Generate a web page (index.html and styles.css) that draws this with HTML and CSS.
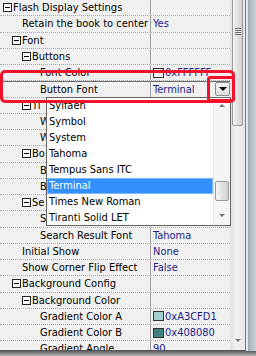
FILE: index.html
```html
<!DOCTYPE html>
<html>
  <head>
    <title>Flash Display Settings</title>
    <link rel="stylesheet" href="styles.css">
  </head>
  <body>
    <div class="window">
      <div class="pane">
        <div class="grid">
          <div class="row"><div class="name g0"><span class="box"></span>Flash Display Settings</div><div class="value"></div></div>
          <div class="row"><div class="name l1">Retain the book to center</div><div class="value">Yes</div></div>
          <div class="row"><div class="name g1"><span class="box"></span>Font</div><div class="value"></div></div>
          <div class="row"><div class="name g2"><span class="box"></span>Buttons</div><div class="value"></div></div>
          <div class="row"><div class="name l3">Font Color</div><div class="value"><span class="swatch white"></span>0xFFFFFF</div></div>
          <div class="row editing"><div class="name l3">Button Font</div><div class="value">Terminal<span class="drop-btn"></span></div></div>
          <!-- rows below are mostly hidden behind the open font list -->
          <div class="row"><div class="name g2"><span class="box"></span>Ti</div><div class="value"></div></div>
          <div class="row"><div class="name l3">W</div><div class="value"></div></div>
          <div class="row"><div class="name l3">W</div><div class="value"></div></div>
          <div class="row"><div class="name g2"><span class="box"></span>Bo</div><div class="value"></div></div>
          <div class="row"><div class="name l3">B</div><div class="value"></div></div>
          <div class="row"><div class="name l3">B</div><div class="value"></div></div>
          <div class="row"><div class="name g2"><span class="box"></span>Se</div><div class="value"></div></div>
          <div class="row"><div class="name l3">S</div><div class="value"></div></div>
          <div class="row"><div class="name l3">Search Result Font</div><div class="value">Tahoma</div></div>
          <div class="row"><div class="name l1">Initial Show</div><div class="value">None</div></div>
          <div class="row"><div class="name l1">Show Corner Flip Effect</div><div class="value">False</div></div>
          <div class="row"><div class="name g1"><span class="box"></span>Background Config</div><div class="value"></div></div>
          <div class="row"><div class="name g2"><span class="box"></span>Background Color</div><div class="value"></div></div>
          <div class="row"><div class="name l3">Gradient Color A</div><div class="value"><span class="swatch aqua"></span>0xA3CFD1</div></div>
          <div class="row"><div class="name l3">Gradient Color B</div><div class="value"><span class="swatch teal"></span>0x408080</div></div>
          <div class="row"><div class="name l3">Gradient Angle</div><div class="value">90</div></div>
        </div>
        <div class="scrollbar">
          <div class="thumb"><span class="grip"></span></div>
          <span class="arrow-down"></span>
        </div>
      </div>
      <div class="frame"></div>

      <div class="dropdown">
        <ul class="options">
          <li>Sylfaen</li>
          <li>Symbol</li>
          <li>System</li>
          <li>Tahoma</li>
          <li>Tempus Sans ITC</li>
          <li class="selected">Terminal</li>
          <li>Times New Roman</li>
          <li>Tiranti Solid LET</li>
        </ul>
        <div class="list-scroll">
          <span class="arrow-up"></span>
          <div class="list-thumb"></div>
          <span class="arrow-down small"></span>
        </div>
      </div>

      <div class="mark mark-row"></div>
      <div class="mark mark-btn"></div>
    </div>
  </body>
</html>
```

FILE: styles.css
```css
body {
  margin: 0;
  background: linear-gradient(#5e5e5e, #c8c8c8 6px, #e0e0e0);
  font-family: "DejaVu Sans Condensed", "Liberation Sans", sans-serif;
  font-size: 11px;
}

.window {
  position: relative;
  display: flex;
  width: 256px;
  height: 351px;
  overflow: hidden;
}

.pane {
  display: flex;
  width: 246px;
  height: 351px;
  box-sizing: border-box;
  border-right: 1px solid #7c7c7c;
  border-bottom: 1px solid #555;
  background: #f0f0f0;
}

.frame {
  width: 10px;
  background: linear-gradient(to right, #dde7f3 0, #dde7f3 2px, #9aa3ad 2px, #b7bcc2 5px, #cfcfcf);
}

.grid {
  width: 231px;
  overflow: hidden;
}

.row {
  display: grid;
  grid-template-columns: 151px 80px;
  height: 16.25px;
  box-sizing: border-box;
  border-bottom: 1px dotted #a8a8a8;
  line-height: 15px;
  white-space: nowrap;
}

.name {
  display: flex;
  align-items: center;
  overflow: hidden;
  border-right: 1px solid #a0a0a0;
  color: #000;
}

.value {
  display: flex;
  align-items: center;
  position: relative;
  padding-left: 2px;
  color: #1c1c8c;
  overflow: hidden;
}

.g0 { padding-left: 3px; }
.g1 { padding-left: 12px; }
.g2 { padding-left: 22px; }
.l1 { padding-left: 22px; }
.l3 { padding-left: 40px; }

.box {
  position: relative;
  width: 7px;
  height: 7px;
  margin-right: 1px;
  border: 1px solid #222;
  background: #fff;
  flex: none;
}

.box::after {
  content: "";
  position: absolute;
  left: 1px;
  top: 3px;
  width: 5px;
  height: 1px;
  background: #000;
}

.swatch {
  width: 9px;
  height: 8px;
  margin-right: 1px;
  border: 1px solid #333;
  flex: none;
}

.swatch.white { background: #fff; }
.swatch.aqua { background: #a3cfd1; }
.swatch.teal { background: #408080; }

.editing {
  border-top: 1px solid #6a6a6a;
}

.editing .name {
  border-left: 1px solid #6a6a6a;
  margin-left: 2px;
  padding-left: 37px;
}

.drop-btn {
  position: absolute;
  right: 1px;
  top: 0;
  width: 15px;
  height: 14px;
  box-sizing: border-box;
  border: 1px solid #8a8a8a;
  border-radius: 2px;
  background: linear-gradient(#f6f6f6, #dcdcdc);
}

.drop-btn::after {
  content: "";
  position: absolute;
  left: 3px;
  top: 4px;
  border-left: 4px solid transparent;
  border-right: 4px solid transparent;
  border-top: 4px solid #000;
}

.scrollbar {
  position: relative;
  width: 14px;
  border-left: 1px solid #e2e2e2;
  background: linear-gradient(to right, #e4e4e4, #f2f2f2 40%, #e6e6e6);
}

.thumb {
  position: absolute;
  left: 1px;
  top: -4px;
  width: 11px;
  height: 130px;
  box-sizing: border-box;
  border: 1px solid #9a9a9a;
  border-radius: 2px;
  background: linear-gradient(to right, #f4f4f4, #e2e2e2 50%, #d0d0d0);
}

.grip {
  position: absolute;
  left: 2px;
  top: 31px;
  width: 6px;
  height: 7px;
  background: repeating-linear-gradient(#6b6b6b 0, #6b6b6b 1px, #e9e9e9 1px, #e9e9e9 2px);
}

.arrow-down {
  position: absolute;
  left: 4px;
  top: 339px;
  border-left: 3px solid transparent;
  border-right: 3px solid transparent;
  border-top: 3px solid #7a7a7a;
}

.dropdown {
  position: absolute;
  left: 46px;
  top: 97px;
  width: 185px;
  height: 129px;
  display: flex;
  box-sizing: border-box;
  border: 1px solid #646464;
  background: #fff;
}

.options {
  flex: 1;
  margin: 0;
  padding: 0;
  list-style: none;
}

.options li {
  height: 16px;
  line-height: 16px;
  padding-left: 2px;
  color: #000;
  white-space: nowrap;
}

.options li.selected {
  background: #3390ff;
  color: #fff;
  box-shadow: inset 0 0 0 1px #7db6f6;
}

.list-scroll {
  position: relative;
  width: 16px;
  border-left: 1px solid #e8e8e8;
  background: #f5f5f5;
}

.list-thumb {
  position: absolute;
  left: 1px;
  top: 83px;
  width: 14px;
  height: 20px;
  box-sizing: border-box;
  border: 1px solid #9a9a9a;
  border-radius: 2px;
  background: linear-gradient(to right, #f6f6f6, #e2e2e2 50%, #d2d2d2);
}

.arrow-up {
  position: absolute;
  left: 5px;
  top: 6px;
  border-left: 3px solid transparent;
  border-right: 3px solid transparent;
  border-bottom: 3px solid #7a7a7a;
}

.arrow-down.small {
  left: 5px;
  top: 116px;
}

.mark {
  position: absolute;
  box-sizing: border-box;
  border: 3px solid #f2132a;
}

.mark-row {
  left: 0;
  top: 70px;
  width: 235px;
  height: 33px;
  border-radius: 5px;
}

.mark-btn {
  left: 207px;
  top: 76px;
  width: 28px;
  height: 26px;
  border-radius: 3px;
}
```
